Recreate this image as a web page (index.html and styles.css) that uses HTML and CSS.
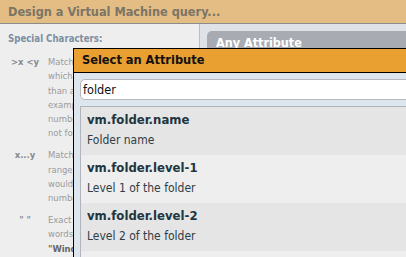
FILE: index.html
```html
<!DOCTYPE html>
<html lang="en">
  <head>
    <meta charset="UTF-8" />
    <meta name="viewport" content="width=device-width, initial-scale=1.0" />
    <title>Design a Virtual Machine query</title>
    <link rel="stylesheet" href="styles.css">
  </head>
  <body>
    <div class="topbar">Design a Virtual Machine query...</div>

    <div class="workspace">
      <div class="help">
        <h4>Special Characters:</h4>
        <dl class="help-list">
          <dt>&gt;x &lt;y</dt>
          <dd>
            Matches values greater or less<br />
            which are larger or smaller<br />
            than a given number. For<br />
            example, &gt;10 finds all<br />
            numbers above 10. Does<br />
            not for text values.
          </dd>
          <dt>x...y</dt>
          <dd>
            Matches values within a<br />
            range. For example 1...5<br />
            would find values between<br />
            numbers 1 and 5.
          </dd>
          <dt>" "</dt>
          <dd>
            Exact phrase. Use quotes for<br />
            words together, for example<br />
            <b>"Windows Server"</b>
          </dd>
        </dl>
      </div>

      <div class="panel">
        <div class="tab">Any Attribute</div>
      </div>
    </div>

    <div class="dialog">
      <div class="dialog-title">Select an Attribute</div>
      <div class="dialog-body">
        <input class="search" type="text" value="folder" />
        <div class="attr-list">
          <div class="attr-row">
            <div class="attr-name">vm.folder.name</div>
            <div class="attr-desc">Folder name</div>
          </div>
          <div class="attr-row">
            <div class="attr-name">vm.folder.level-1</div>
            <div class="attr-desc">Level 1 of the folder</div>
          </div>
          <div class="attr-row">
            <div class="attr-name">vm.folder.level-2</div>
            <div class="attr-desc">Level 2 of the folder</div>
          </div>
          <div class="attr-row"></div>
        </div>
      </div>
    </div>
  </body>
</html>
```
FILE: styles.css
```css
body {
  margin: 0;
  width: 406px;
  height: 257px;
  overflow: hidden;
  position: relative;
  font-family: "DejaVu Sans Condensed", "DejaVu Sans", sans-serif;
}
.topbar {
  height: 23px;
  line-height: 23px;
  padding-left: 8px;
  background: #e3bd83;
  border-bottom: 1px solid #8e8c88;
  color: #7b7467;
  font-size: 12.6px;
  font-weight: bold;
  white-space: nowrap;
}
.workspace {
  display: flex;
  height: 233px;
}
.help {
  width: 191px;
  padding: 8px 0 0 8px;
  background: #eeeeee;
  border-right: 1px solid #b9bdc2;
}
.help h4 {
  margin: 0 0 9px;
  font-size: 9.6px;
  line-height: 14px;
  color: #7d8fa1;
}
.help-list {
  display: grid;
  grid-template-columns: 34px 1fr;
  column-gap: 6px;
  row-gap: 7.5px;
  margin: 0;
  font-size: 9.4px;
  line-height: 14.3px;
}
.help-list dt {
  text-align: center;
  font-weight: bold;
  color: #868a90;
}
.help-list dd {
  margin: 0;
  color: #9b9b9b;
  white-space: nowrap;
}
.help-list dd b {
  color: #666;
}
.panel {
  flex: 1;
  padding: 7px 0 0 7px;
  background: #dfe3e8;
}
.tab {
  height: 24px;
  line-height: 24px;
  padding-left: 9px;
  background: #a8acb2;
  border-radius: 5px 0 0 0;
  color: #fff;
  font-size: 12.5px;
  font-weight: bold;
}
.dialog {
  position: absolute;
  left: 73px;
  top: 48px;
  width: 340px;
  height: 208px;
  border: 1px solid #000;
  border-bottom: none;
  background: #dde5ed;
  overflow: hidden;
}
.dialog-title {
  height: 23px;
  line-height: 21px;
  padding-left: 8px;
  background: #e9a030;
  border-bottom: 1px solid #000;
  color: #111;
  font-size: 12.7px;
  font-weight: bold;
}
.dialog-body {
  padding: 6px 0 0 6px;
}
.search {
  display: block;
  box-sizing: border-box;
  width: 340px;
  height: 21px;
  margin: 0;
  padding: 0 2px;
  border: 1px solid #b4b9bf;
  border-radius: 5px;
  background: #fff;
  font-family: inherit;
  font-size: 12.6px;
  color: #111;
  outline: none;
}
.attr-list {
  margin-top: 6px;
  border-top: 1px solid #b0b5bb;
  border-left: 1px solid #b0b5bb;
}
.attr-row {
  height: 48px;
  box-sizing: border-box;
  padding: 5px 0 0 6px;
  background: #e5e5e5;
  color: #2f3d45;
  line-height: 15px;
}
.attr-row:nth-child(even) {
  background: #eeeeee;
}
.attr-name {
  font-size: 13px;
  font-weight: bold;
  color: #1f3540;
}
.attr-desc {
  margin-top: 6px;
  font-size: 12px;
}
```
